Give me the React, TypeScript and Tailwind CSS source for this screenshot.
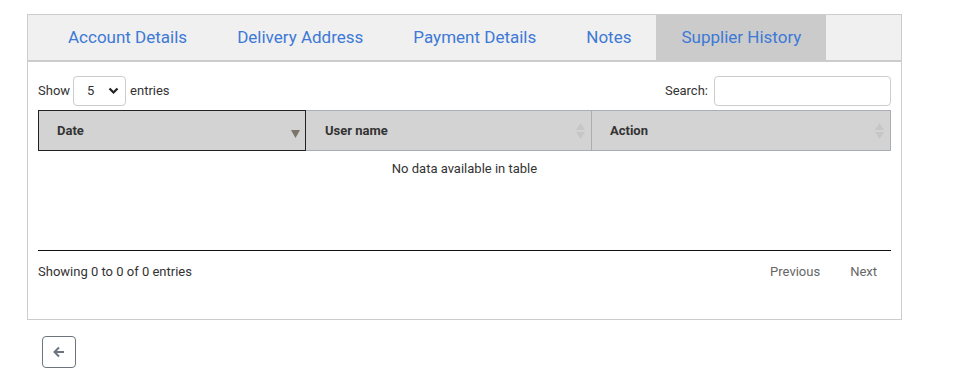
import React from "react";

const tabs = ["Account Details", "Delivery Address", "Payment Details", "Notes", "Supplier History"];

function SortBoth() {
  return (
    <svg width="9" height="16" viewBox="0 0 9 16" className="shrink-0">
      <path d="M4.5 0 L9 7 L0 7 Z" fill="#c6c6c6" />
      <path d="M4.5 16 L9 9 L0 9 Z" fill="#c6c6c6" />
    </svg>
  );
}

function SortDesc() {
  return (
    <svg width="9" height="8" viewBox="0 0 9 8" className="shrink-0">
      <path d="M0 0 L9 0 L4.5 8 Z" fill="#7d7468" />
    </svg>
  );
}

export default function App() {
  return (
    <div className="w-[962px] h-[386px] bg-white pt-[14px] pl-[27px]" style={{ fontFamily: "Roboto, 'Liberation Sans', sans-serif" }}>
      <div className="w-[875px] h-[306px] border border-[#cccccc] flex flex-col">
        <div className="h-[47px] bg-[#f0f0f0] border-b-2 border-[#cccccc] flex pl-[15px]">
          {tabs.map((t, i) => (
            <div
              key={t}
              className={`h-full px-[25px] flex items-center text-[17px] text-[#3d79d6] ${i === 4 ? "bg-[#cbcbcb]" : ""}`}
            >
              {t}
            </div>
          ))}
        </div>
        <div className="px-[10px] pt-[14px] text-[13px] text-[#333333]">
          <div className="flex items-center justify-between h-[30px]">
            <div className="flex items-center">
              <span>Show</span>
              <div className="ml-[3px] mr-[4px] w-[53px] h-[30px] border border-[#cccccc] rounded-[4px] flex items-center justify-between pl-[13px] pr-[6px] text-[13px]">
                <span>5</span>
                <svg width="11" height="8" viewBox="0 0 11 8">
                  <path d="M1.5 1.5 L5.5 5.5 L9.5 1.5" fill="none" stroke="#222" strokeWidth="2.2" />
                </svg>
              </div>
              <span>entries</span>
            </div>
            <div className="flex items-center">
              <span className="mr-[6px]">Search:</span>
              <div className="w-[177px] h-[30px] border border-[#cccccc] rounded-[4px]" />
            </div>
          </div>
          <div className="mt-[4px] flex h-[41px] bg-[#d3d3d3] font-bold text-[#333333]">
            <div className="w-[268px] border border-[#222222] flex items-center justify-between pl-[18px] pr-[5px] pt-[1px]">
              <span>Date</span>
              <span className="mt-[6px]"><SortDesc /></span>
            </div>
            <div className="w-[285px] border-y border-[#a9aeb5] flex items-center justify-between pl-[19px] pr-[6px]">
              <span>User name</span>
              <SortBoth />
            </div>
            <div className="flex-1 border border-[#a9aeb5] flex items-center justify-between pl-[18px] pr-[6px]">
              <span>Action</span>
              <SortBoth />
            </div>
          </div>
          <div className="h-[100px] border-b border-[#111111] flex justify-center pt-[8px]">
            <span>No data available in table</span>
          </div>
          <div className="flex items-center justify-between mt-[10px]">
            <span>Showing 0 to 0 of 0 entries</span>
            <div className="flex items-center text-[#666666] mr-[14px] mt-[1px]">
              <span>Previous</span>
              <span className="ml-[30px]">Next</span>
            </div>
          </div>
        </div>
      </div>
      <div className="mt-[16px] ml-[15px] w-[34px] h-[32px] border border-[#6c757d] rounded-[4px] flex items-center justify-center">
        <svg width="14" height="14" viewBox="0 0 14 14">
          <path d="M12 7 H2.5 M7 2.5 L2.5 7 L7 11.5" fill="none" stroke="#6c757d" strokeWidth="2" />
        </svg>
      </div>
    </div>
  );
}
